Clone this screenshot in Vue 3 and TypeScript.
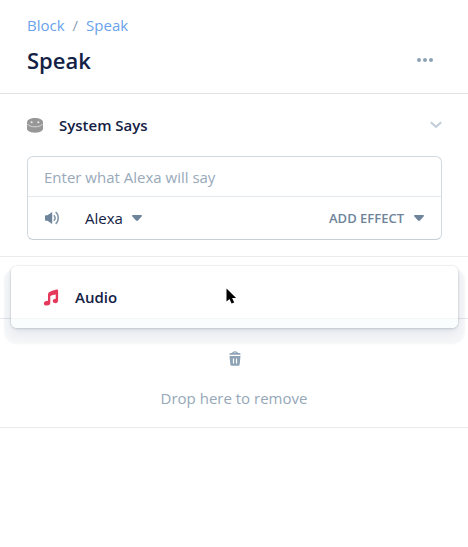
<script setup lang="ts">
import { ref } from 'vue'

const crumbs: string[] = ['Block', 'Speak']
const speech = ref('')
const voice = ref('Alexa')
</script>

<template>
  <main class="editor">
    <header class="header">
      <nav class="crumbs">
        <template v-for="(crumb, i) in crumbs" :key="crumb">
          <span v-if="i > 0" class="slash">/</span>
          <a>{{ crumb }}</a>
        </template>
      </nav>
      <div class="title-row">
        <h1>Speak</h1>
        <svg class="more" width="16" height="4" viewBox="0 0 16 4">
          <circle cx="2" cy="2" r="2" /><circle cx="8" cy="2" r="2" /><circle cx="14" cy="2" r="2" />
        </svg>
      </div>
    </header>

    <section class="speak">
      <div class="section-head">
        <svg class="system" width="16" height="15" viewBox="0 0 16 15">
          <path d="M0 4.3C0 1.800 3.500 0 8 0s8 1.800 8 4.300v6.200C16 13 12.500 14.700 8 14.700S0 13 0 10.500z" fill="#979797" />
          <path d="M.4 5.800C1.300 7.800 4.300 8.800 8 8.800s6.700-1 7.600-3" fill="none" stroke="#dedede" stroke-width=".9" />
          <circle cx="4.600" cy="4.200" r="1" fill="#eee" /><circle cx="11.400" cy="4.200" r="1" fill="#eee" />
        </svg>
        <h2>System Says</h2>
        <svg class="chevron" width="12" height="8" viewBox="0 0 12 8">
          <path d="M.8 1.200L6 5.800l5.200-4.600" fill="none" stroke="#c3ceda" stroke-width="2.100" />
        </svg>
      </div>
      <div class="box">
        <input v-model="speech" class="speech" placeholder="Enter what Alexa will say" />
        <div class="tools">
          <svg class="speaker" width="16" height="14" viewBox="0 0 16 14">
            <path d="M1.800 4.200h1.700L8.200 1v12L3.500 9.800H1.800Q1 9.800 1 9V5q0-.8.800-.8z" fill="#6e849a" />
            <path d="M9.800 4.200q2.700 2.800 0 5.600M11.600 1.200Q14.200 3 14.200 7t-2.600 5.800" fill="none" stroke="#8195a8" stroke-width="1.500" />
          </svg>
          <span class="voice">{{ voice }}</span>
          <svg class="caret" width="10" height="6" viewBox="0 0 10 6"><path d="M.8 0h8.400q1.200.5.4 1.500L6 5.500q-1 .9-2 0L.4 1.500Q-.4.500.8 0z" /></svg>
          <span class="effect">ADD EFFECT</span>
          <svg class="caret" width="10" height="6" viewBox="0 0 10 6"><path d="M.8 0h8.400q1.200.5.4 1.500L6 5.500q-1 .9-2 0L.4 1.500Q-.4.500.8 0z" /></svg>
        </div>
      </div>
    </section>

    <section class="slot">
      <div class="drag-card">
        <svg class="note" width="16" height="17" viewBox="0 0 16 17">
          <path d="M5 5.600Q5 3.600 6.900 2.800 9.500 1.300 13.700.6 15.100.3 15.100 1.600v9.700q0 2.900-2.900 2.900-2.500 0-2.500-2.100 0-2.300 3-2.400V5.400Q9.500 5.600 7.300 7v6.800q0 2.700-3.500 2.700-2.900 0-2.900-2.100 0-2.500 4.100-2.600z" />
        </svg>
        <span>Audio</span>
      </div>
      <svg class="cursor" width="14" height="20" viewBox="0 0 14 20">
        <path d="M2.500 1.500v13l3-2.500 2.100 4.600 2.600-1.100-2.100-4.500h4z" fill="#000" stroke="#fff" stroke-width="2" paint-order="stroke" />
      </svg>
    </section>

    <section class="remove">
      <svg class="trash" width="12" height="15" viewBox="0 0 12 15">
        <path d="M3.400 2.500Q4 .9 6 .9t2.600 1.600" fill="none" stroke="#8da2b5" stroke-width="1.400" />
        <path d="M1.500 2h9q1 0 1.200 1.800H.3Q.5 2 1.500 2zM.5 5h11l-.8 8.200q-.2 1.500-1.600 1.500H2.900q-1.400 0-1.600-1.500z" fill="#8da2b5" />
        <path d="M4.500 7.500v5M7.500 7.500v5" stroke="#fff" stroke-width="1.200" />
      </svg>
      <span>Drop here to remove</span>
    </section>
  </main>
</template>

<style>
body {
  background: #fff;
}
</style>

<style scoped>
.editor {
  box-sizing: border-box;
  width: 468px;
  height: 547px;
  overflow: hidden;
  color: #132144;
  font: 15px/20px 'Open Sans', sans-serif;
}
.header {
  box-sizing: border-box;
  height: 94px;
  padding: 15px 35px 0 27px;
  border-bottom: 1px solid #dfe2e5;
}
.crumbs {
  display: flex;
  gap: 8px;
  color: #6aa2ea;
}
.slash {
  color: #8da2b5;
}
.title-row {
  display: flex;
  align-items: center;
  justify-content: space-between;
  height: 30px;
  margin-top: 10px;
}
h1,
h2 {
  margin: 0;
  font-weight: 600;
}
h1 {
  font-size: 22px;
  line-height: 30px;
}
.more {
  fill: #8da2b5;
  margin-top: -1px;
}
.speak {
  box-sizing: border-box;
  height: 163px;
  padding: 21px 26px 0 27px;
  border-bottom: 1px solid #eaedf0;
}
.section-head {
  display: flex;
  align-items: center;
  height: 20px;
  margin-bottom: 21px;
}
h2 {
  margin-left: 16px;
  font-size: 15px;
  line-height: 20px;
}
.chevron {
  margin-left: auto;
}
.box {
  box-sizing: border-box;
  height: 84px;
  border: 1px solid #d2d9e0;
  border-bottom-color: #c6cfd6;
  border-radius: 6px;
}
.speech {
  box-sizing: border-box;
  display: block;
  width: 100%;
  height: 40px;
  padding: 0 16px;
  border: 0;
  border-bottom: 1px solid #e4e9ed;
  outline: 0;
  background: none;
  color: #132144;
  font: inherit;
}
.speech::placeholder {
  color: #98a9ba;
  opacity: 1;
}
.tools {
  display: flex;
  align-items: center;
  height: 42px;
  padding: 0 17px 0 16px;
}
.voice {
  margin: 0 9px 1px 25px;
}
.caret {
  fill: #6e849a;
}
.effect {
  margin: 0 10px 0 auto;
  color: #6e849a;
  font-size: 13px;
  font-weight: 600;
}
.slot {
  position: relative;
  box-sizing: border-box;
  height: 62px;
  border-bottom: 1px solid #e5e9ed;
}
.drag-card {
  position: absolute;
  z-index: 1;
  top: 9px;
  left: 11px;
  box-sizing: border-box;
  display: flex;
  align-items: center;
  gap: 16px;
  width: 447px;
  height: 62px;
  padding-left: 32px;
  border-radius: 6px;
  background: linear-gradient(#fff 52px, #f4f7f8 52px, #f4f7f8 53px, #fafdfd 53px);
  box-shadow:
    0 0 1px 1px rgba(19, 33, 68, 0.05),
    0 1px 3px rgba(19, 49, 68, 0.14),
    0 6px 10px rgba(19, 49, 96, 0.07),
    0 9px 2px 7px rgba(19, 49, 96, 0.045);
  font-weight: 600;
}
.note {
  fill: #e5395b;
}
.cursor {
  position: absolute;
  z-index: 2;
  top: 30px;
  left: 224px;
}
.remove {
  box-sizing: border-box;
  display: flex;
  flex-direction: column;
  align-items: center;
  gap: 22px;
  height: 109px;
  padding-top: 32px;
  border-bottom: 1px solid #e7ebee;
  color: #95a7b8;
}
.trash {
  margin-left: 2px;
}
</style>
